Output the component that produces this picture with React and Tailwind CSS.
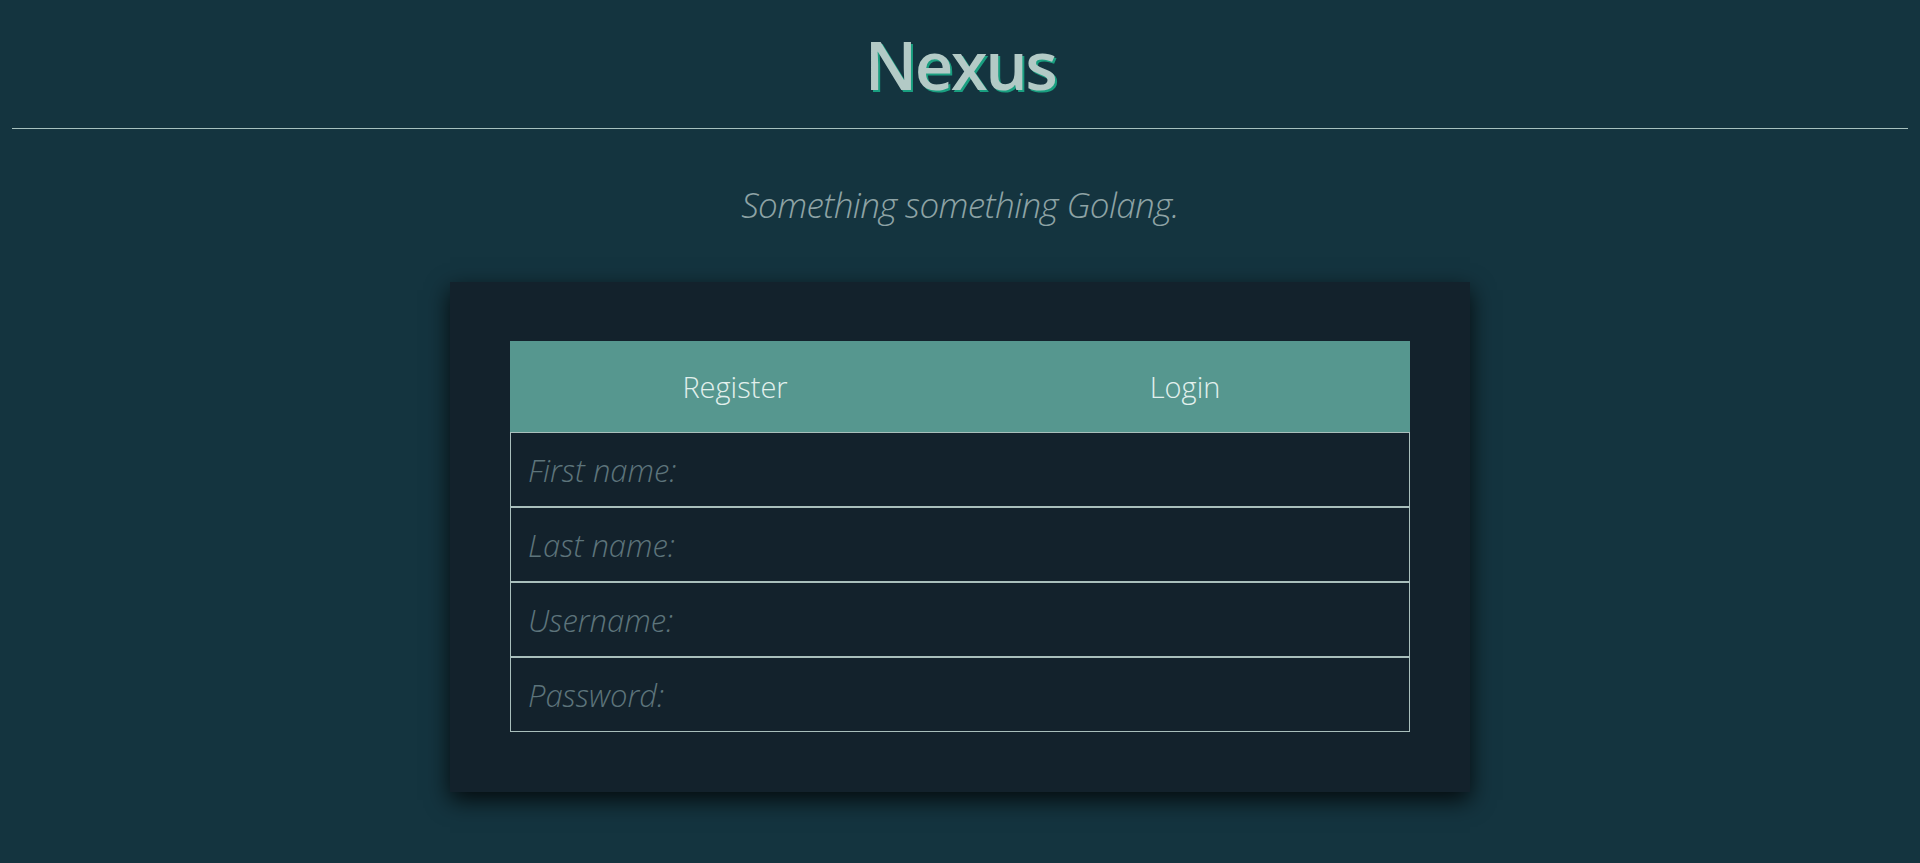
const fields = ['First name:', 'Last name:', 'Username:', 'Password:'];

export default function App() {
  return (
    <div className="min-h-screen bg-[#14343f] font-['Open_Sans',sans-serif]">
      <header className="flex h-[128px] items-center justify-center">
        <h1 className="text-[67px] font-semibold leading-none tracking-[-2.5px] text-[#b3cac6] [text-shadow:2px_2px_0_#1a9f80]">
          Nexus
        </h1>
      </header>
      <div className="mx-3 h-px bg-[#a7c1be]" />
      <div className="flex h-[153px] items-center justify-center">
        <p className="text-[35px] font-light italic tracking-[-0.6px] text-[#8ea3a5]">Something something Golang.</p>
      </div>
      <div className="mx-auto h-[510px] w-[1020px] bg-[#13222c] px-[60px] pt-[59px] shadow-[0_8px_22px_rgba(0,0,0,0.8)]">
        <div className="grid h-[91px] grid-cols-2 bg-[#56978f] text-[29px] font-light text-[#e2f0ed]">
          <button className="flex items-center justify-center">Register</button>
          <button className="flex items-center justify-center">Login</button>
        </div>
        {fields.map((label) => (
          <input
            key={label}
            type={label === 'Password:' ? 'password' : 'text'}
            placeholder={label}
            className="block h-[75px] w-full border border-[#a9bfbc] bg-transparent px-[17px] text-[31px] font-light italic text-[#c9d9d6] outline-none placeholder:text-[#5d747b]"
          />
        ))}
      </div>
    </div>
  );
}
